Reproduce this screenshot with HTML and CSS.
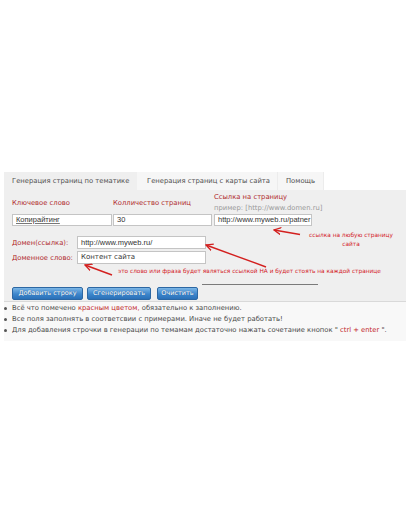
FILE: index.html
```html
<!DOCTYPE html>
<html lang="ru">
<head>
<meta charset="utf-8">
<title>Генерация страниц</title>
<link rel="stylesheet" href="styles.css">
</head>
<body>
<div class="spacer"></div>
<div class="widget">
  <div class="tabs">
    <div class="tab tab-1 active">Генерация страниц по тематике</div>
    <div class="tab tab-2">Генерация страниц с карты сайта</div>
    <div class="tab tab-3">Помощь</div>
  </div>
  <div class="panel">
    <div class="grid3">
      <div class="lbl">Ключевое слово</div>
      <div class="lbl">Колличество страниц</div>
      <div class="lbl">Ссылка на страницу<br><span class="hint">пример: [http://www.domen.ru]</span></div>
      <div class="inp w1"><span class="spell">Копирайтинг</span></div>
      <div class="inp w2">30</div>
      <div class="inp w3">http://www.myweb.ru/patner</div>
    </div>
    <div class="frow first">
      <div class="flbl">Домен(ссылка):</div>
      <div class="inp wide">http://www.myweb.ru/</div>
    </div>
    <div class="frow">
      <div class="flbl">Доменное слово:</div>
      <div class="inp wide word">Контент сайта</div>
    </div>
    <div class="buttons">
      <div class="btn b1">Добавить строку</div>
      <div class="btn b2">Сгенерировать</div>
      <div class="btn b3">Очистить</div>
    </div>
  </div>
  <ul class="notes">
    <li>Всё что помечено <span class="red">красным цветом,</span> обязательно к заполнению.</li>
    <li>Все поля заполнять в соответсвии с примерами. Иначе не будет работать!</li>
    <li>Для добавления строчки в генерации по темамам достаточно нажать сочетание кнопок " <span class="red">ctrl + enter</span> ".</li>
  </ul>
</div>

<div class="note note-link">ссылка на любую страницу<br>сайта</div>
<div class="note note-word">это слово или фраза будет являться ссылкой НА и будет стоять на каждой странице</div>
<div class="gline"></div>

<svg class="arrows" width="406" height="516" viewBox="0 0 406 516">
  <defs>
    <marker id="ah" viewBox="0 0 8 8" refX="1" refY="4" markerWidth="8" markerHeight="8" markerUnits="userSpaceOnUse" orient="auto">
      <path d="M8,0.5 L1,4 L8,7.5" fill="none" stroke="#d3201f" stroke-width="1.3"/>
    </marker>
  </defs>
  <path d="M274,230 L300,234.5" stroke="#d3201f" stroke-width="1.4" fill="none" marker-start="url(#ah)"/>
  <path d="M206,245 L266,267" stroke="#d3201f" stroke-width="1.4" fill="none" marker-start="url(#ah)"/>
  <path d="M85,265 L112,275" stroke="#d3201f" stroke-width="1.4" fill="none" marker-start="url(#ah)"/>
</svg>
</body>
</html>
```
FILE: styles.css
```css
html, body {
  margin: 0;
  padding: 0;
  background: #ffffff;
}
body {
  width: 406px;
  height: 516px;
  position: relative;
  overflow: hidden;
  font-family: "DejaVu Sans", "Noto Sans", sans-serif;
  font-size: 6.8px;
  color: #4a4a4a;
}
.spacer {
  height: 172px;
}
.widget {
  margin-left: 4px;
  width: 402px;
}
.tabs {
  display: flex;
  height: 18px;
}
.tab {
  line-height: 18px;
  color: #505050;
  box-sizing: border-box;
  white-space: nowrap;
}
.tab-1 {
  width: 133px;
  padding-left: 8px;
  background: #efefef;
}
.tab-2 {
  width: 141px;
  padding-left: 10px;
  background: #f6f6f6;
  border-right: 1px solid #ececec;
}
.tab-3 {
  width: 46px;
  padding-left: 8px;
  background: #f6f6f6;
  border-right: 1px solid #ececec;
}
.panel {
  background: #efefef;
  padding: 2px 0 1px 8px;
  border-bottom: 1px solid #d9d9d9;
}
.grid3 {
  display: grid;
  grid-template-columns: 101px 101px 100px;
  grid-template-rows: 22px 12px;
  align-items: center;
}
.lbl {
  color: #b02a2c;
  line-height: 11px;
  white-space: nowrap;
}
.hint {
  color: #9a9a9a;
}
.inp {
  box-sizing: border-box;
  height: 12px;
  background: #ffffff;
  border: 1px solid #c4c4c4;
  font-family: "Liberation Sans", Arial, sans-serif;
  font-size: 7.5px;
  line-height: 10px;
  color: #333333;
  padding-left: 3px;
  white-space: nowrap;
  overflow: hidden;
}
.w1 { width: 100px; }
.w2 { width: 99px; }
.w3 { width: 98px; }
.spell {
  text-decoration: underline;
  text-decoration-color: #777777;
}
.frow {
  display: flex;
  align-items: center;
  margin-top: 2px;
}
.frow.first {
  margin-top: 10px;
}
.flbl {
  width: 65px;
  color: #b02a2c;
  white-space: nowrap;
}
.wide {
  width: 129px;
  height: 13px;
  line-height: 11px;
}
.word {
  font-family: "DejaVu Sans", sans-serif;
  font-size: 7px;
}
.buttons {
  display: flex;
  margin-top: 23px;
}
.btn {
  box-sizing: border-box;
  height: 13px;
  line-height: 11px;
  font-size: 6.5px;
  color: #ffffff;
  text-align: center;
  white-space: nowrap;
  border: 1px solid #2c67a3;
  border-radius: 2px;
  background: linear-gradient(#7cb6e6, #3d86cc 55%, #2a70b8);
  text-shadow: 0 0 1px #1d4f84;
}
.b1 { width: 71px; }
.b2 { width: 64px; margin-left: 4px; }
.b3 { width: 41px; margin-left: 6px; }
.notes {
  list-style: none;
  margin: 0;
  padding: 1px 0 5px 0;
  background: #f8f8f8;
}
.notes li {
  position: relative;
  line-height: 11px;
  padding-left: 8px;
  white-space: nowrap;
  color: #4a4a4a;
}
.notes li::before {
  content: "";
  position: absolute;
  left: 0;
  top: 4px;
  width: 3px;
  height: 3px;
  border-radius: 50%;
  background: #555555;
}
.red {
  color: #c3282c;
}
.note {
  position: absolute;
  color: #d3201f;
  font-size: 5.8px;
  line-height: 9px;
  white-space: nowrap;
}
.note-link {
  left: 309px;
  top: 231px;
  width: 84px;
  text-align: center;
}
.note-word {
  left: 118px;
  top: 267px;
}
.gline {
  position: absolute;
  left: 202px;
  top: 284px;
  width: 116px;
  height: 1px;
  background: #7a7a7a;
}
.arrows {
  position: absolute;
  left: 0;
  top: 0;
  pointer-events: none;
}
```
